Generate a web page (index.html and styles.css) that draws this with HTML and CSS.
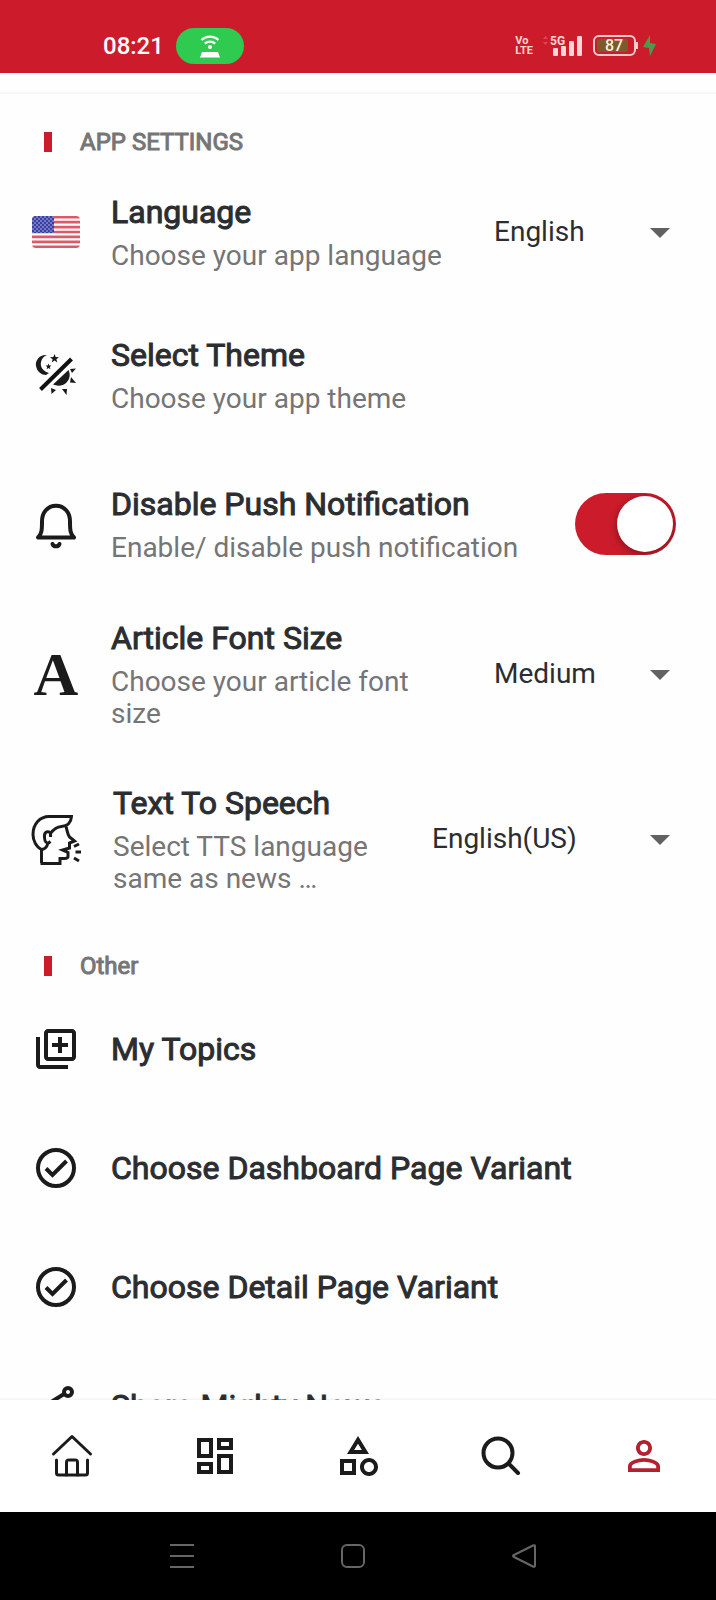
FILE: index.html
```
<!DOCTYPE html>
<html lang="en">

<head>
    <title>App Settings</title>
    <meta charset="utf-8">
    <meta name="viewport" content="width=device-width, initial-scale=1.0">
    <link rel="stylesheet" href="styles.css">
</head>

<body>
    <header class="statusbar">
        <div class="status-left">
            <time>08:21</time>
            <span class="hotspot">
                <svg width="24" height="24" viewBox="0 0 24 24" fill="none" stroke="#fff" stroke-width="2.2">
                    <path d="M3.5 6a12.5 12.5 0 0 1 17 0M6.8 9.6a7.6 7.6 0 0 1 10.4 0" />
                    <circle cx="12" cy="13" r="2" fill="#fff" stroke="none" />
                    <path d="M4 18h16l2 5.500H2z" fill="#fff" stroke="none" />
                </svg>
            </span>
        </div>
        <div class="status-right">
            <span class="volte">Vo<br>LTE</span>
            <svg class="signal" width="40" height="24" viewBox="0 0 40 24">
                <path d="M0 5l2.500-3L5 5zM0 8l2.500 3L5 8z" fill="#e04552" />
                <text x="7" y="11" class="signal-text">5G</text>
                <g fill="#ffd5d5">
                    <rect x="10" y="14" width="5" height="8" rx="1" />
                    <rect x="18" y="12" width="5" height="10" rx="1" />
                    <rect x="26" y="7" width="5" height="15" rx="1" />
                    <rect x="34" y="2" width="5" height="20" rx="1" />
                </g>
            </svg>
            <svg class="battery" width="46" height="22" viewBox="0 0 46 22">
                <rect x="1" y="1" width="41" height="19" rx="5" fill="none" stroke="#ffc9cc" stroke-width="2" />
                <rect x="4" y="4" width="31" height="13" rx="2" fill="#7c5a2c" />
                <path d="M44 7v7" stroke="#ffc9cc" stroke-width="2" />
                <text x="21" y="16" text-anchor="middle" class="battery-text">87</text>
            </svg>
            <svg class="bolt" width="14" height="22" viewBox="0 0 14 22">
                <path d="M7 0L0 12l6 1 1 8 6-12-6-1z" fill="#4c9a4c" />
            </svg>
        </div>
    </header>

    <main>
        <h2 class="first">APP SETTINGS</h2>
        <section>
            <div class="setting language">
                <svg class="icon" viewBox="0 0 48 48">
                    <defs>
                        <clipPath id="flag"><rect y="8" width="48" height="32" rx="4" /></clipPath>
                        <pattern id="stars" width="4" height="4" patternUnits="userSpaceOnUse">
                            <circle cx="1" cy="1" r=".7" fill="#dfe2fa" />
                            <circle cx="3" cy="3" r=".7" fill="#dfe2fa" />
                        </pattern>
                    </defs>
                    <g clip-path="url(#flag)">
                        <path fill="#fff" d="M0 8h48v32H0z" />
                        <path d="M0 9.200h48M0 14.100h48M0 19.100h48M0 24h48M0 28.900h48M0 33.900h48M0 38.800h48" stroke="#dc5a68" stroke-width="2.700" />
                        <path fill="#3a3fa5" d="M0 8h22v17H0z" />
                        <path fill="url(#stars)" d="M0 8h22v17H0z" />
                    </g>
                </svg>
                <label for="language">
                    <strong>Language</strong>
                    <small>Choose your app language</small>
                </label>
                <span class="dropdown">
                    <select id="language">
                        <option>English</option>
                    </select>
                </span>
            </div>
            <div class="setting theme">
                <svg class="icon" viewBox="0 0 48 48">
                    <path d="M15 4C8 3 3 9 4 15c1 6 6 9 10 9l3-2C11 20 8 16 9 11c1-4 3-6 6-7z" />
                    <path d="M22.500 3l1.200 3 3.300.2-2.600 2 .9 3.200-2.800-1.800-2.800 1.800.9-3.200-2.600-2 3.300-.2zM16.500 12.500l.8 2 2.200.1-1.700 1.400.6 2.200-1.900-1.200-1.900 1.200.6-2.200-1.700-1.400 2.200-.1z" />
                    <path d="M8.500 38.500L39.500 8" stroke="#111" stroke-width="4" />
                    <path d="M21 33.500L36.500 19c2 4 1.500 9-2 12.500s-9 4-13.500 2z" />
                    <path d="M38 18l6-.5-4 4.500zM39 26l5 6-6-.5zM30 38l5 0-.5 6zM19 37l5 2-4.500 4z" />
                </svg>
                <div class="text">
                    <strong>Select Theme</strong>
                    <small>Choose your app theme</small>
                </div>
            </div>
            <div class="setting push">
                <svg class="icon line" viewBox="0 0 48 48" stroke-linejoin="round" stroke-linecap="round">
                    <path d="M6 37.500C9.500 34 10 31 10 21.500 10 12.500 15.500 5.800 24 5.800S38 12.500 38 21.500C38 31 38.500 34 42 37.500z" />
                    <path d="M20.500 44c1 3 6 3 7 0" />
                </svg>
                <label for="push">
                    <strong>Disable Push Notification</strong>
                    <small>Enable/ disable push notification</small>
                </label>
                <input type="checkbox" class="switch" id="push" checked>
            </div>
            <div class="setting font-size">
                <span class="icon letter">A</span>
                <label for="font-size">
                    <strong>Article Font Size</strong>
                    <small>Choose your article font size</small>
                </label>
                <span class="dropdown">
                    <select id="font-size">
                        <option>Medium</option>
                    </select>
                </span>
            </div>
            <div class="setting speech">
                <svg class="icon line thin" viewBox="0 0 48 48">
                    <path d="M9.500 48V34.500C4 32 1 25 1 19.500 1 9 8 1.500 17 1.500H39.500C39 8 35 11 29.500 11.500 24 12 21 15 18.500 18.500" />
                    <path d="M18.500 22v-4.500c-4-2-6.500 0-6 5 .3 4 1 5.500 4 5.500l2-1.500M16 28c-1 4-3 6.500-7 6.500" />
                    <path d="M34 11.500c1.500 5 1.500 8 3.500 10.500l5 4-5 2v5l-7 2 5.500 2.500v4c0 2-2 2-8 2V48.500H8.500" />
                    <path d="M42 31.500l5-2.500M43.500 37h5.500M42 43l5 3" />
                </svg>
                <label for="speech">
                    <strong>Text To Speech</strong>
                    <small>Select TTS language same as news …</small>
                </label>
                <span class="dropdown">
                    <select id="speech">
                        <option>English(US)</option>
                    </select>
                </span>
            </div>
        </section>

        <h2>Other</h2>
        <section>
            <a class="setting" href="#topics">
                <svg class="icon" viewBox="0 0 24 24">
                    <path d="M4 6H2v14c0 1.100.9 2 2 2h14v-2H4V6zm16-4H8c-1.100 0-2 .9-2 2v12c0 1.100.9 2 2 2h12c1.100 0 2-.9 2-2V4c0-1.100-.9-2-2-2zm0 14H8V4h12v12zm-7-2h2v-3h3V9h-3V6h-2v3h-3v2h3z" />
                </svg>
                <strong>My Topics</strong>
            </a>
            <a class="setting" href="#dashboard">
                <svg class="icon line" viewBox="0 0 48 48">
                    <circle cx="24" cy="24" r="18" />
                    <path d="M14 24.500l6.500 6.500L34.500 17" />
                </svg>
                <strong>Choose Dashboard Page Variant</strong>
            </a>
            <a class="setting" href="#detail">
                <svg class="icon line" viewBox="0 0 48 48">
                    <circle cx="24" cy="24" r="18" />
                    <path d="M14 24.500l6.500 6.500L34.500 17" />
                </svg>
                <strong>Choose Detail Page Variant</strong>
            </a>
            <a class="setting" href="#share">
                <svg class="icon line" viewBox="0 0 48 48">
                    <circle cx="36" cy="10" r="4" />
                    <circle cx="12" cy="24" r="4" />
                    <circle cx="36" cy="38" r="4" />
                    <path d="M32 12L16 22M16 26l16 10" />
                </svg>
                <strong>Share Mighty News</strong>
            </a>
        </section>
    </main>

    <nav class="tabs">
        <a href="#home" aria-label="Home">
            <svg class="icon line thin" viewBox="0 0 48 48" stroke-linecap="round" stroke-linejoin="round">
                <path d="M5.500 22L24 4.500 42.500 22M8.500 28v13c0 1.500.5 2 2 2h27c1.500 0 2-.5 2-2V28" />
                <path d="M18.500 43V30.500c0-2 .5-2.500 2.500-2.500h6c2 0 2.500.5 2.500 2.500V43" />
            </svg>
        </a>
        <a href="#boards" aria-label="Dashboard">
            <svg class="icon" viewBox="0 0 24 24">
                <path d="M19 5v2h-4V5h4M9 5v6H5V5h4m10 8v6h-4v-6h4M9 17v2H5v-2h4M21 3h-8v6h8V3zM11 3H3v10h8V3zm10 8h-8v10h8V11zm-10 4H3v6h8v-6z" />
            </svg>
        </a>
        <a href="#category" aria-label="Categories">
            <svg class="icon" viewBox="0 0 24 24">
                <path d="M12 2l-5.500 9h11L12 2zm0 3.840L13.930 9h-3.870L12 5.840zM17.500 13c-2.490 0-4.500 2.010-4.500 4.500s2.010 4.500 4.500 4.500 4.500-2.010 4.500-4.500-2.010-4.500-4.500-4.500zm0 7c-1.380 0-2.500-1.120-2.500-2.500s1.120-2.500 2.500-2.500 2.500 1.120 2.500 2.500-1.120 2.500-2.500 2.500zM3 21.500h8v-8H3v8zm2-6h4v4H5v-4z" />
            </svg>
        </a>
        <a href="#search" aria-label="Search">
            <svg class="icon line" viewBox="0 0 48 48" stroke-linecap="round">
                <circle cx="21" cy="21" r="14.500" />
                <path d="M32 32l9 9" />
            </svg>
        </a>
        <a href="#profile" class="valgt" aria-label="Profile">
            <svg class="icon" viewBox="0 0 24 24">
                <path d="M12 5.900a2.100 2.100 0 1 1 0 4.200 2.100 2.100 0 0 1 0-4.200m0 9c2.970 0 6.100 1.460 6.100 2.100v1.100H5.900V17c0-.64 3.130-2.100 6.100-2.100M12 4C9.790 4 8 5.790 8 8s1.790 4 4 4 4-1.790 4-4-1.790-4-4-4zm0 9c-2.670 0-8 1.340-8 4v3h16v-3c0-2.660-5.330-4-8-4z" />
            </svg>
        </a>
    </nav>

    <footer class="system">
        <button aria-label="Recent apps">
            <svg width="26" height="26" viewBox="0 0 26 26"><path d="M1 2h24M1 13h24M1 24h24" /></svg>
        </button>
        <button aria-label="Home screen">
            <svg width="26" height="26" viewBox="0 0 26 26"><rect x="2" y="2" width="22" height="22" rx="5" /></svg>
        </button>
        <button aria-label="Back">
            <svg width="26" height="26" viewBox="0 0 26 26"><path d="M22 2.500L3 12q-2 1 0 2l19 9.500q2 1 2-1V3.500q0-2-2-1z" /></svg>
        </button>
    </footer>
</body>

</html>
```
FILE: styles.css
```
* {
    box-sizing: border-box;
}

body {
    margin: 0;
    height: 100vh;
    display: flex;
    flex-direction: column;
    background: #fefefe;
    color: #2b2d30;
    font-family: Roboto, sans-serif;
}

/* status bar */
.statusbar {
    display: flex;
    justify-content: space-between;
    align-items: center;
    height: 73px;
    padding: 19px 59px 0 103px;
    background: #cc1c2b;
    color: #fff;
    flex: none;
}

.status-left,
.status-right {
    display: flex;
    align-items: center;
}

.status-left {
    gap: 12px;
    font-size: 24px;
    font-weight: 500;
}

.hotspot {
    display: flex;
    align-items: center;
    justify-content: center;
    width: 68px;
    height: 36px;
    border-radius: 18px;
    background: #2fca50;
}

.status-right {
    gap: 10px;
}

.bolt {
    margin-left: -6px;
}

.volte {
    font: bold 11px/10px "Liberation Sans Narrow", Roboto, sans-serif;
    color: #ffd5d5;
}

.signal-text {
    font: bold 12px Roboto, sans-serif;
    fill: #ffd5d5;
}

.battery-text {
    font: 500 16px Roboto, sans-serif;
    fill: #fff0d8;
}

/* settings list */
main {
    flex: 1;
    min-height: 0;
    overflow: hidden;
    margin-top: 19px;
    border-top: 2px solid #f6f6f6;
}

h2 {
    display: flex;
    align-items: center;
    gap: 28px;
    margin: 0;
    padding: 27px 44px 11px;
    font-size: 24px;
    line-height: 24px;
    font-weight: 400;
    color: #757575;
    -webkit-text-stroke: 1px;
}

h2::before {
    content: "";
    width: 8px;
    height: 20px;
    background: #cc1c2b;
}

h2.first {
    padding-top: 36px;
}

.setting {
    display: flex;
    align-items: center;
    gap: 31px;
    min-height: 119px;
    padding: 0 40px 0 32px;
    color: inherit;
    text-decoration: none;
}

.setting.language {
    min-height: 134px;
}

.setting.theme {
    min-height: 152px;
}

.setting.push {
    min-height: 146px;
}

.setting.font-size {
    min-height: 154px;
}

.setting.speech {
    min-height: 176px;
    gap: 33px;
}

.setting label,
.setting .text {
    flex: 1;
}

.setting.font-size label,
.setting.speech label {
    padding-right: 20px;
}

strong {
    display: block;
    font-size: 32px;
    line-height: 38px;
    font-weight: 400;
    -webkit-text-stroke: 1px;
}

small {
    display: block;
    margin-top: 9px;
    font-size: 28px;
    line-height: 32px;
    color: #757575;
}

.icon {
    width: 48px;
    height: 48px;
    flex: none;
    fill: #1b1b1b;
    overflow: visible;
}

.line {
    fill: none;
    stroke: #1b1b1b;
    stroke-width: 4;
}

.thin {
    stroke-width: 3;
}

.letter {
    font: bold 62px/48px "Liberation Serif", serif;
    color: #1b1b1b;
    text-align: center;
}

.dropdown {
    position: relative;
    width: 182px;
}

.dropdown::after {
    content: "";
    position: absolute;
    top: 15px;
    right: 6px;
    border: 10px solid transparent;
    border-top-color: #616161;
    border-bottom: 0;
    pointer-events: none;
}

.speech .dropdown {
    width: 244px;
}

select {
    appearance: none;
    width: 100%;
    padding: 0;
    border: 0;
    background: none;
    color: inherit;
    font: 28px/38px Roboto, sans-serif;
}

.switch {
    appearance: none;
    display: flex;
    width: 101px;
    height: 62px;
    margin: 0;
    padding: 3px;
    border-radius: 31px;
    background: #cc1c2b;
    overflow: hidden;
}

.switch::before {
    content: "";
    width: 56px;
    height: 56px;
    border-radius: 50%;
    background: #fff;
    box-shadow: 0 2px 8px rgba(0, 0, 0, .4);
}

.switch:checked::before {
    margin-left: auto;
}

/* bottom tabs */
.tabs {
    display: flex;
    height: 112px;
    flex: none;
    background: #fff;
    box-shadow: 0 -1px 2px rgba(0, 0, 0, .06);
}

.tabs a {
    display: flex;
    flex: 1;
    align-items: center;
    justify-content: center;
}

.tabs .valgt .icon {
    fill: #b3202e;
}

.system {
    display: flex;
    align-items: center;
    justify-content: center;
    gap: 145px;
    height: 88px;
    padding-right: 10px;
    flex: none;
    background: #000;
}

.system button {
    display: flex;
    padding: 0;
    border: 0;
    background: none;
}

.system svg {
    fill: none;
    stroke: #666;
    stroke-width: 2;
}
```
